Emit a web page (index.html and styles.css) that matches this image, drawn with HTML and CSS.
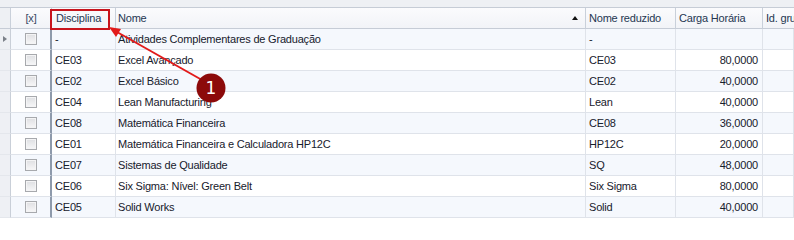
FILE: index.html
```html
<!DOCTYPE html>
<html lang="pt">
<head>
<meta charset="utf-8">
<link rel="stylesheet" href="styles.css">
</head>
<body>
<div class="page">
  <div class="topstrip"></div>
  <div class="grid">
    <div class="row head">
      <div class="c ind"></div>
      <div class="c chk"><span class="hx">[x]</span></div>
      <div class="c dis">Disciplina</div>
      <div class="c nome sorted">Nome<span class="sort"></span></div>
      <div class="c red">Nome reduzido</div>
      <div class="c carga">Carga Horária</div>
      <div class="c idg">Id. gru</div>
    </div>
    <div class="row alt">
      <div class="c ind"><span class="cur"></span></div>
      <div class="c chk"><span class="box"></span></div>
      <div class="c dis">-</div>
      <div class="c nome">Atividades Complementares de Graduação</div>
      <div class="c red">-</div>
      <div class="c carga num"></div>
      <div class="c idg"></div>
    </div>
    <div class="row">
      <div class="c ind"></div>
      <div class="c chk"><span class="box"></span></div>
      <div class="c dis">CE03</div>
      <div class="c nome">Excel Avançado</div>
      <div class="c red">CE03</div>
      <div class="c carga num">80,0000</div>
      <div class="c idg"></div>
    </div>
    <div class="row alt">
      <div class="c ind"></div>
      <div class="c chk"><span class="box"></span></div>
      <div class="c dis">CE02</div>
      <div class="c nome">Excel Básico</div>
      <div class="c red">CE02</div>
      <div class="c carga num">40,0000</div>
      <div class="c idg"></div>
    </div>
    <div class="row">
      <div class="c ind"></div>
      <div class="c chk"><span class="box"></span></div>
      <div class="c dis">CE04</div>
      <div class="c nome">Lean Manufacturing</div>
      <div class="c red">Lean</div>
      <div class="c carga num">40,0000</div>
      <div class="c idg"></div>
    </div>
    <div class="row alt">
      <div class="c ind"></div>
      <div class="c chk"><span class="box"></span></div>
      <div class="c dis">CE08</div>
      <div class="c nome">Matemática Financeira</div>
      <div class="c red">CE08</div>
      <div class="c carga num">36,0000</div>
      <div class="c idg"></div>
    </div>
    <div class="row">
      <div class="c ind"></div>
      <div class="c chk"><span class="box"></span></div>
      <div class="c dis">CE01</div>
      <div class="c nome">Matemática Financeira e Calculadora HP12C</div>
      <div class="c red">HP12C</div>
      <div class="c carga num">20,0000</div>
      <div class="c idg"></div>
    </div>
    <div class="row alt">
      <div class="c ind"></div>
      <div class="c chk"><span class="box"></span></div>
      <div class="c dis">CE07</div>
      <div class="c nome">Sistemas de Qualidade</div>
      <div class="c red">SQ</div>
      <div class="c carga num">48,0000</div>
      <div class="c idg"></div>
    </div>
    <div class="row">
      <div class="c ind"></div>
      <div class="c chk"><span class="box"></span></div>
      <div class="c dis">CE06</div>
      <div class="c nome">Six Sigma: Nível: Green Belt</div>
      <div class="c red">Six Sigma</div>
      <div class="c carga num">80,0000</div>
      <div class="c idg"></div>
    </div>
    <div class="row alt">
      <div class="c ind"></div>
      <div class="c chk"><span class="box"></span></div>
      <div class="c dis">CE05</div>
      <div class="c nome">Solid Works</div>
      <div class="c red">Solid</div>
      <div class="c carga num">40,0000</div>
      <div class="c idg"></div>
    </div>
  </div>
  <div class="highlight"></div>
  <svg class="callout" width="794" height="240" viewBox="0 0 794 240">
    <line x1="202" y1="80" x2="117" y2="32" stroke="#e21a1a" stroke-width="2"/>
    <polygon points="109,27 121,29 116,37" fill="#e21a1a"/>
    <circle cx="211" cy="88" r="14.5" fill="#8c0a0a"/>
    <text x="211" y="94" text-anchor="middle" class="num1">1</text>
  </svg>
</div>
</body>
</html>
```
FILE: styles.css
```css
* { box-sizing: border-box; }
html, body { margin: 0; padding: 0; background: #ffffff; }
body {
  font-family: "Liberation Sans", Arial, sans-serif;
  font-size: 11px;
  letter-spacing: -0.2px;
  color: #17202c;
}
.page {
  position: relative;
  width: 794px;
  height: 240px;
  overflow: hidden;
}
.topstrip {
  height: 8px;
  background-color: #eef0f4;
  background-image: radial-gradient(#e2e5ea 0.6px, transparent 0.7px);
  background-size: 2px 2px;
  border-bottom: 1px solid #c6ccd6;
}
.grid { display: flex; flex-direction: column; }
.row {
  display: grid;
  grid-template-columns: 11px 41px 64px 470px 90px 87px 31px;
  height: 21px;
  background: #ffffff;
}
.row.alt { background: #f5f8fd; }
.c {
  border-right: 1px solid #dfe3ea;
  border-bottom: 1px solid #dfe3ea;
  line-height: 20px;
  padding: 0 4px;
  white-space: nowrap;
  overflow: hidden;
}
.row .dis { padding-left: 3px; }
.row .nome { padding-left: 2px; }
.row .red { padding-left: 3px; }
.num { text-align: right; padding-right: 4px; }
.ind {
  padding: 0;
  background-color: #eef0f4;
  background-image: radial-gradient(#e0e3e8 0.6px, transparent 0.7px);
  background-size: 2px 2px;
  border-right: 1px solid #c9cfd8;
  border-bottom: 1px solid #e4e7ec;
  position: relative;
}
.chk {
  padding: 0;
  display: flex;
  align-items: center;
  justify-content: center;
  border-right: 2px solid #8e9aab;
}
.head {
  height: 21px;
  background: linear-gradient(#fbfbfd, #f1f3f7);
  color: #243651;
}
.head .c {
  border-right: 1px solid #c9d0da;
  border-bottom: 1px solid #c6ccd6;
  line-height: 20px;
}
.head .ind { background: #eef0f4; border-bottom: 1px solid #c6ccd6; }
.head .chk { border-right: 1px solid #c9d0da; }
.head .dis { padding-left: 4px; }
.head .nome { padding-left: 2px; position: relative; }
.head .red { padding-left: 3px; }
.head .carga { padding-left: 3px; }
.head .idg { padding-left: 3px; border-right: none; }
.hx { color: #3a4a62; }
.sort {
  position: absolute;
  right: 7px;
  top: 8px;
  width: 0;
  height: 0;
  border-left: 3.5px solid transparent;
  border-right: 3.5px solid transparent;
  border-bottom: 4px solid #111;
}
.box {
  width: 12px;
  height: 12px;
  border: 1px solid #a7a9ad;
  background: linear-gradient(#dedfe2, #f7f7f8);
  box-shadow: inset 0 0 0 1px #f4f4f5;
}
.cur {
  position: absolute;
  left: 3px;
  top: 7px;
  width: 0;
  height: 0;
  border-top: 3px solid transparent;
  border-bottom: 3px solid transparent;
  border-left: 4px solid #7b8088;
}
.highlight {
  position: absolute;
  left: 50px;
  top: 9px;
  width: 60px;
  height: 21px;
  border: 2px solid #c8141c;
}
.callout { position: absolute; left: 0; top: 0; }
.num1 {
  fill: #ffffff;
  font-family: "DejaVu Sans", sans-serif;
  font-size: 17px;
  letter-spacing: 0;
}
```
